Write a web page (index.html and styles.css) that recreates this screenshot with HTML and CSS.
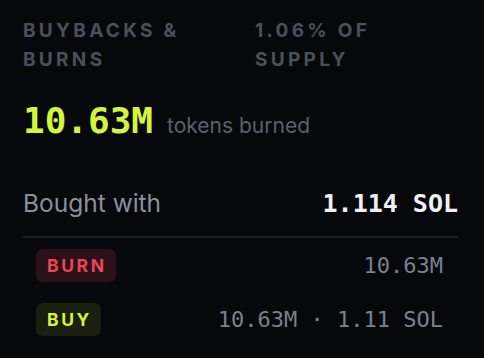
FILE: index.html
```html
<!DOCTYPE html>
<html>
<head>
<meta charset="utf-8">
<link rel="stylesheet" href="styles.css">
</head>
<body>
<div class="card">
  <div class="head">
    <div class="label">Buybacks &amp; Burns</div>
    <div class="label">1.06% of supply</div>
  </div>
  <div class="hero">
    <span class="big">10.63M</span>
    <span class="unit">tokens burned</span>
  </div>
  <div class="bought">
    <span class="bought-label">Bought with</span>
    <span class="bought-value">1.114 SOL</span>
  </div>
  <div class="list">
    <div class="row">
      <span class="badge burn">BURN</span>
      <span class="val">10.63M</span>
    </div>
    <div class="row">
      <span class="badge buy">BUY</span>
      <span class="val">10.63M · 1.11 SOL</span>
    </div>
  </div>
</div>
</body>
</html>
```
FILE: styles.css
```css
html, body {
  margin: 0;
  padding: 0;
  background: #07080c;
}
body {
  width: 484px;
  height: 358px;
  overflow: hidden;
  font-family: Inter, "Noto Sans", sans-serif;
}
.card {
  padding: 16px 26px 0 23px;
}
.head {
  display: grid;
  grid-template-columns: 232px 1fr;
}
.label {
  font-size: 19px;
  line-height: 29px;
  font-weight: 700;
  letter-spacing: 3.3px;
  text-transform: uppercase;
  color: #4a4f5b;
  width: 175px;
}
.hero {
  margin-top: 26px;
  display: flex;
  align-items: baseline;
  gap: 14px;
}
.big {
  font-family: "DejaVu Sans Mono", monospace;
  font-weight: 700;
  font-size: 36px;
  color: #d4f53c;
}
.unit {
  font-size: 21px;
  color: #5a606c;
}
.bought {
  margin-top: 47px;
  display: flex;
  justify-content: space-between;
  align-items: baseline;
  padding-bottom: 18px;
  border-bottom: 2px solid #1c2129;
}
.bought-label {
  font-size: 24.5px;
  color: #8a909c;
}
.bought-value {
  font-family: "DejaVu Sans Mono", monospace;
  font-weight: 700;
  font-size: 25px;
  color: #eef0f3;
}
.list {
  display: flex;
  flex-direction: column;
}
.row {
  display: flex;
  justify-content: space-between;
  align-items: center;
  padding: 11px 15px 10px 13px;
}
.badge {
  height: 33px;
  display: flex;
  align-items: center;
  padding: 0 9px 0 11px;
  border-radius: 7px;
  font-size: 17.5px;
  font-weight: 700;
  letter-spacing: 2.6px;
}
.burn {
  background: #2a1218;
  color: #ec4459;
}
.buy {
  background: #1b1f10;
  color: #d4f53c;
}
.val {
  font-family: "DejaVu Sans Mono", monospace;
  font-size: 22px;
  color: #7b818e;
}
```
